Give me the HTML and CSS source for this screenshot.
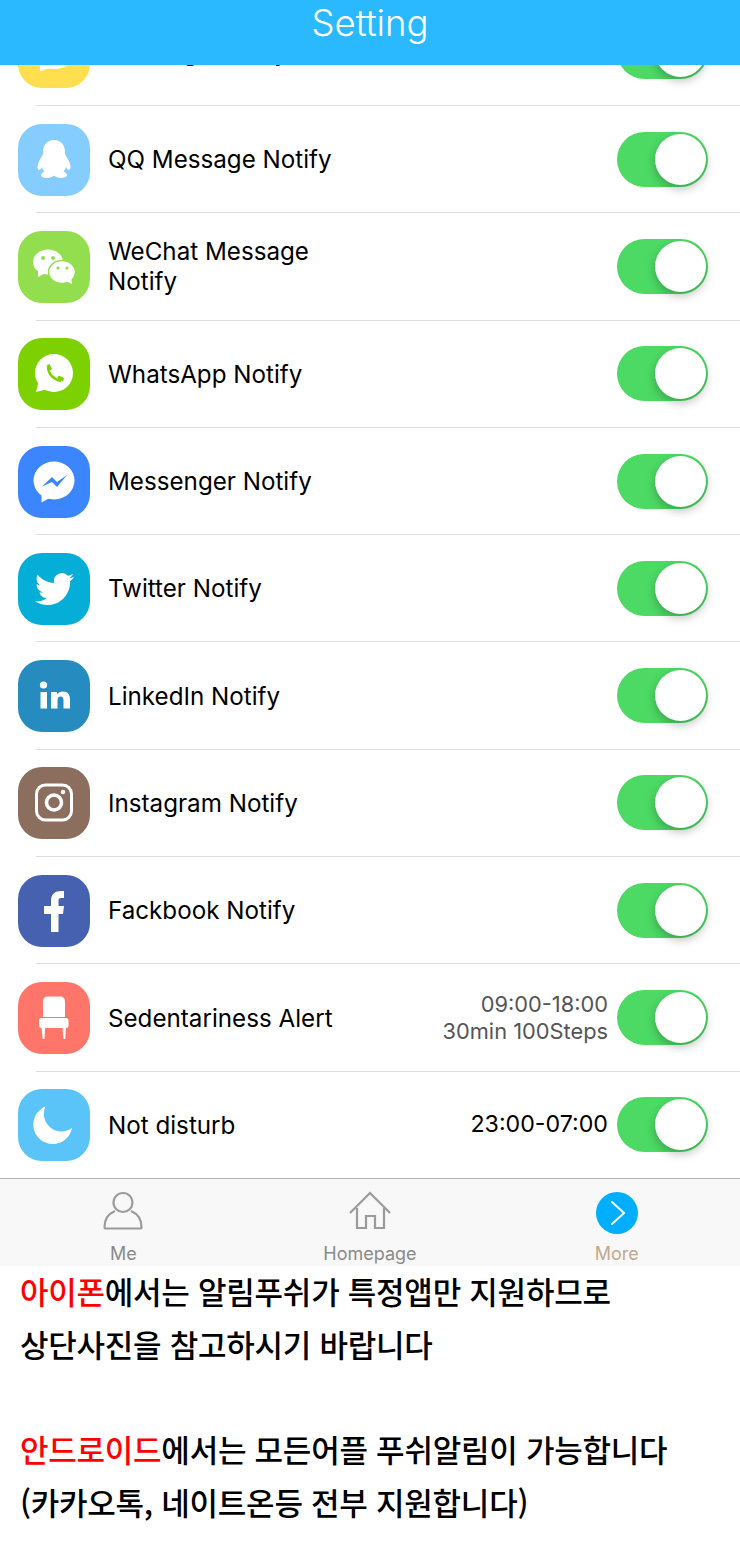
FILE: index.html
```html
<!DOCTYPE html>
<html lang="ko">
<head>
    <meta charset="UTF-8">
    <meta name="viewport" content="width=device-width, initial-scale=1.0">
    <title>Setting</title>
    <link rel="stylesheet" href="styles.css">
</head>
<body>
    <header class="top-bar">Setting</header>

    <main class="list-wrap">
        <div class="notify-list">
            <div class="row">
                <svg class="app-icon yellow" viewBox="0 0 72 72">
                    <ellipse cx="36" cy="35" rx="22" ry="18" fill="#fff"/>
                    <path fill="#fff" d="M22 46v9l10-3z"/>
                </svg>
                <div class="label">Message Notify</div>
                <div class="switch"><span class="knob"></span></div>
            </div>
            <hr class="line">

            <div class="row">
                <svg class="app-icon qq" viewBox="0 0 72 72"><path fill="#fff" d="M36 16c-7 0-11 5-11 12 0 2-.3 3-1 4-2 3-4.500 7-4.500 11 0 2 .8 3 1.500 3 1 0 2-1 3-3 .5 2 1.500 3.500 2.500 4.500-2 .7-3.500 2-3.500 3.500 0 2 3 3 6 3 3.500 0 5.500-1 7-2.500 1.500 1.500 3.500 2.500 7 2.500 3 0 6-1 6-3 0-1.500-1.500-2.800-3.500-3.500 1-1 2-2.500 2.500-4.500 1 2 2 3 3 3 .7 0 1.500-1 1.500-3 0-4-2.500-8-4.500-11-.7-1-1-2-1-4 0-7-4-12-11-12z"/></svg>
                <div class="label">QQ Message Notify</div>
                <div class="switch"><span class="knob"></span></div>
            </div>
            <hr class="line">

            <div class="row">
                <svg class="app-icon wechat" viewBox="0 0 72 72">
                    <ellipse cx="30" cy="31" rx="15" ry="12.500" fill="#fff"/>
                    <path fill="#fff" d="M20 38l0 8 8-4z"/>
                    <ellipse cx="44" cy="41" rx="13.500" ry="11.500" fill="#fff" stroke="#93de4f" stroke-width="1.500"/>
                    <path fill="#fff" d="M48 50l6 3-1-7z"/>
                    <circle cx="25" cy="27" r="2" fill="#93de4f"/>
                    <circle cx="35" cy="27" r="2" fill="#93de4f"/>
                    <circle cx="40" cy="37" r="1.600" fill="#93de4f"/>
                    <circle cx="49" cy="37" r="1.600" fill="#93de4f"/>
                </svg>
                <div class="label">WeChat Message Notify</div>
                <div class="switch"><span class="knob"></span></div>
            </div>
            <hr class="line">

            <div class="row">
                <svg class="app-icon whatsapp" viewBox="0 0 72 72">
                    <circle cx="36" cy="35" r="19" fill="#fff"/>
                    <path fill="#fff" d="M18 54l3-12 9 9z"/>
                    <path fill="none" stroke="#7ed100" stroke-width="2.600" d="M30 29c.5 7 5 12 13 14"/>
                    <path fill="#7ed100" d="M28.500 27.500l3-1.500 2.500 5-2.500 2zM39 40l2-2.500 5 2.500-1 3.500z"/>
                </svg>
                <div class="label">WhatsApp Notify</div>
                <div class="switch"><span class="knob"></span></div>
            </div>
            <hr class="line">

            <div class="row">
                <svg class="app-icon messenger" viewBox="0 0 72 72">
                    <ellipse cx="36" cy="34.500" rx="20.500" ry="19" fill="#fff"/>
                    <path fill="#fff" d="M23.500 47v9.500l9-5z"/>
                    <path fill="#3b86ff" d="M24 40.500l10-9.500 5 5 10-7-10 12-5-5z"/>
                </svg>
                <div class="label">Messenger Notify</div>
                <div class="switch"><span class="knob"></span></div>
            </div>
            <hr class="line">

            <div class="row">
                <svg class="app-icon twitter" viewBox="0 0 72 72"><path transform="translate(17 16.500) scale(1.63)" fill="#fff" d="M23.953 4.570a10 10 0 01-2.825.775 4.958 4.958 0 002.163-2.723c-.951.555-2.005.959-3.127 1.184a4.920 4.920 0 00-8.384 4.482C7.690 8.095 4.067 6.130 1.640 3.162a4.822 4.822 0 00-.666 2.475c0 1.710.870 3.213 2.188 4.096a4.904 4.904 0 01-2.228-.616v.060a4.923 4.923 0 003.946 4.827 4.996 4.996 0 01-2.212.085 4.936 4.936 0 004.604 3.417 9.867 9.867 0 01-6.102 2.105c-.390 0-.779-.023-1.170-.067a13.995 13.995 0 007.557 2.209c9.053 0 13.998-7.496 13.998-13.985 0-.210 0-.420-.015-.630A9.935 9.935 0 0024 4.590z"/></svg>
                <div class="label">Twitter Notify</div>
                <div class="switch"><span class="knob"></span></div>
            </div>
            <hr class="line">

            <div class="row">
                <svg class="app-icon linkedin" viewBox="0 0 72 72">
                    <circle cx="25.500" cy="25" r="3.600" fill="#fff"/>
                    <rect x="22.500" y="32" width="6.500" height="16.500" fill="#fff"/>
                    <path fill="#fff" d="M33 32h6v2.500c1.300-1.900 3.400-3 6-3 4.800 0 7 3 7 8v9h-6.500v-8c0-2.500-1-4-3-4s-3 1.500-3 4v8H33z"/>
                </svg>
                <div class="label">LinkedIn Notify</div>
                <div class="switch"><span class="knob"></span></div>
            </div>
            <hr class="line">

            <div class="row">
                <svg class="app-icon instagram" viewBox="0 0 72 72">
                    <rect x="18.500" y="18" width="35" height="35" rx="9" fill="none" stroke="#fff" stroke-width="3"/>
                    <circle cx="36" cy="35.500" r="7.500" fill="none" stroke="#fff" stroke-width="3.600"/>
                    <circle cx="45" cy="25" r="2.300" fill="#fff"/>
                </svg>
                <div class="label">Instagram Notify</div>
                <div class="switch"><span class="knob"></span></div>
            </div>
            <hr class="line">

            <div class="row">
                <svg class="app-icon facebook" viewBox="0 0 72 72"><path fill="#fff" d="M33 57V39h-7v-8h7v-5c0-7 4-10 10-10h3v7h-3c-2 0-2.500 1-2.500 3v5H46l-1 8h-4.500v18z"/></svg>
                <div class="label">Fackbook Notify</div>
                <div class="switch"><span class="knob"></span></div>
            </div>
            <hr class="line">

            <div class="row">
                <svg class="app-icon chair" viewBox="0 0 72 72">
                    <path fill="#fff" d="M30 14.500h12c3 0 5 2 5 5V35H25V19.500c0-3 2-5 5-5z"/>
                    <rect x="21" y="36" width="29.500" height="10" rx="2.500" fill="#fff"/>
                    <path fill="#fff" d="M23.500 46h3.500l-.5 11h-1.800zM44.500 46H48l-.7 11h-1.800z"/>
                </svg>
                <div class="label">Sedentariness Alert</div>
                <div class="value muted">09:00-18:00<br>30min 100Steps</div>
                <div class="switch"><span class="knob"></span></div>
            </div>
            <hr class="line">

            <div class="row">
                <svg class="app-icon moon" viewBox="0 0 72 72"><path fill="#fff" d="M27.500 17.500A19.500 19.500 0 1 0 54 39 17.600 17.600 0 0 1 27.500 17.500z"/></svg>
                <div class="label">Not disturb</div>
                <div class="value">23:00-07:00</div>
                <div class="switch"><span class="knob"></span></div>
            </div>
        </div>
    </main>

    <nav class="tab-bar">
        <div class="tab">
            <svg class="tab-icon" viewBox="0 0 44 44" fill="none" stroke="#9b9b9b" stroke-width="2.200">
                <circle cx="22" cy="11.500" r="9.500"/>
                <path d="M14 20C7 23 3.500 28 3.500 36c0 1 .5 1.500 1.500 1.500h34c1 0 1.500-.5 1.500-1.500 0-8-3.500-13-10.500-16"/>
            </svg>
            <span>Me</span>
        </div>
        <div class="tab">
            <svg class="tab-icon" viewBox="0 0 44 44" fill="none" stroke="#9b9b9b" stroke-width="2.200">
                <path d="M2 22L22 2l20 20"/>
                <path d="M9 17v20h9V25h9v12h9V17"/>
            </svg>
            <span>Homepage</span>
        </div>
        <div class="tab active">
            <svg class="tab-icon" viewBox="0 0 44 44">
                <circle cx="22" cy="22" r="21" fill="#00aeff"/>
                <path d="M17 11l12 11-12 11" fill="none" stroke="#fff" stroke-width="2" stroke-linecap="round"/>
            </svg>
            <span>More</span>
        </div>
    </nav>

    <section class="notice">
        <p><em>아이폰</em>에서는 알림푸쉬가 특정앱만 지원하므로</p>
        <p>상단사진을 참고하시기 바랍니다</p>
        <p>&nbsp;</p>
        <p><em>안드로이드</em>에서는 모든어플 푸쉬알림이 가능합니다</p>
        <p>(카카오톡, 네이트온등 전부 지원합니다)</p>
    </section>
</body>
</html>
```

FILE: styles.css
```css
* {
    margin: 0;
    padding: 0;
    box-sizing: border-box;
}

body {
    font-family: Inter, "Noto Sans", sans-serif;
    background-color: white;
    color: black;
    height: 1541px;
    overflow: hidden;
}

.top-bar {
    position: relative;
    z-index: 2;
    height: 65px;
    background-color: #2ab9ff;
    color: white;
    font-size: 36.5px;
    font-weight: 300;
    line-height: 47px;
    text-align: center;
}

.list-wrap {
    height: 1113px;
    overflow: hidden;
}

.notify-list {
    margin-top: -66.300px;
}

.row {
    display: flex;
    align-items: center;
    height: 106.300px;
    padding-left: 18px;
}

.line {
    height: 1px;
    margin-left: 36px;
    border: none;
    background-color: #dcdcdc;
}

.app-icon {
    flex: none;
    width: 72px;
    height: 72px;
    margin-top: 1px;
    border-radius: 24px;
}

.yellow { background-color: #ffdf50; }
.qq { background-color: #85cdff; }
.wechat { background-color: #93de4f; }
.whatsapp { background-color: #7ed100; }
.messenger { background-color: #3b86ff; }
.twitter { background-color: #04aed6; }
.linkedin { background-color: #268cc0; }
.instagram { background-color: #8c6e5f; }
.facebook { background-color: #4561b0; }
.chair { background-color: #ff756a; }
.moon { background-color: #5ac3f8; }

.label {
    width: 240px;
    margin-left: 18px;
    padding-top: 2px;
    font-size: 24.200px;
    line-height: 30px;
}

.value {
    margin-left: auto;
    font-size: 23.200px;
    line-height: 27px;
    text-align: right;
}

.value.muted {
    color: #555;
    font-size: 21.800px;
}

.switch {
    flex: none;
    display: flex;
    justify-content: flex-end;
    align-items: center;
    width: 91px;
    height: 55px;
    margin-left: 9px;
    padding-right: 2px;
    border-radius: 28px;
    background-color: #4cd964;
}

.label + .switch {
    margin-left: auto;
    margin-right: 32px;
}

.value + .switch {
    margin-right: 32px;
}

.knob {
    width: 51px;
    height: 51px;
    border-radius: 50%;
    background-color: white;
    box-shadow: 0 4px 10px rgba(0, 0, 0, 0.25);
}

.tab-bar {
    display: grid;
    grid-template-columns: repeat(3, 1fr);
    height: 88px;
    border-top: 1px solid #b4b4b4;
    background-color: #f8f8f8;
}

.tab {
    display: flex;
    flex-direction: column;
    align-items: center;
    padding-top: 12px;
    color: #8a8a8a;
    font-size: 18px;
    line-height: 22px;
}

.tab.active {
    color: #c2a88d;
}

.tab-icon {
    width: 44px;
    height: 44px;
    margin-bottom: 8px;
}

.notice {
    margin-top: -1px;
    padding-left: 20px;
    font-family: "Noto Sans CJK KR", sans-serif;
    font-size: 31px;
    font-weight: 500;
    line-height: 52.700px;
    letter-spacing: -0.250px;
}

.notice em {
    color: #ff0000;
    font-style: normal;
}
```
